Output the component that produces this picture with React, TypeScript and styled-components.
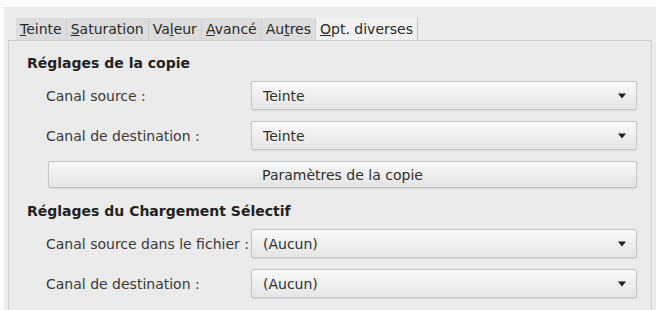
import styled, { createGlobalStyle } from 'styled-components';

const GlobalStyle = createGlobalStyle`
  html, body {
    margin: 0;
    padding: 0;
    background: #fbfbfb;
  }
  body {
    font-family: 'DejaVu Sans', 'Liberation Sans', sans-serif;
    font-size: 14px;
    color: #333333;
  }
`;

const tabs = [
  { pre: '', key: 'T', post: 'einte' },
  { pre: '', key: 'S', post: 'aturation' },
  { pre: 'Va', key: 'l', post: 'eur' },
  { pre: '', key: 'A', post: 'vancé' },
  { pre: 'Au', key: 't', post: 'res' },
  { pre: '', key: 'O', post: 'pt. diverses' },
];

const Window = styled.div`
  margin: 7px 0 0 4px;
  height: calc(100vh - 7px);
  background: #ebebeb;
  padding: 11px 4px 0 4px;
  box-sizing: border-box;
  overflow: hidden;
`;

const TabBar = styled.div`
  display: flex;
  padding-left: 8px;
  height: 22px;
`;

const Tab = styled.div<{ $active?: boolean }>`
  height: 22px;
  line-height: 22px;
  padding: 0 4px;
  background: ${({ $active }) => ($active ? '#f1f1f1' : '#dcdcdc')};
  border-right: 1px solid ${({ $active }) => ($active ? '#c4c4c4' : '#d0d0d0')};
  color: #2a2a2a;
  white-space: nowrap;
`;

const Pane = styled.div`
  border: 1px solid #cfcfcf;
  border-bottom: none;
  height: 300px;
  padding: 14px 14px 0 18px;
  box-sizing: border-box;
`;

const Heading = styled.div<{ $top?: number }>`
  font-weight: bold;
  line-height: 16px;
  color: #222222;
  margin-top: ${({ $top }) => $top ?? 0}px;
`;

const Rows = styled.div`
  display: flex;
  flex-direction: column;
  gap: 11px;
  margin-top: 10px;
  padding-left: 19px;
`;

const Row = styled.div`
  display: grid;
  grid-template-columns: 205px 1fr;
  align-items: center;
`;

const Label = styled.div`
  color: #3a3a3a;
  white-space: nowrap;
`;

const Combo = styled.div`
  height: 29px;
  box-sizing: border-box;
  border: 1px solid #c6c6c6;
  border-radius: 2px;
  background: linear-gradient(#f8f8f8, #e6e6e6);
  box-shadow: 0 1px 1px rgba(0, 0, 0, 0.08);
  display: flex;
  align-items: center;
  justify-content: space-between;
  padding: 0 10px 0 11px;
  color: #2f2f2f;
`;

const Button = styled.div`
  height: 27px;
  margin-left: 2px;
  box-sizing: border-box;
  border: 1px solid #c6c6c6;
  border-radius: 2px;
  background: linear-gradient(#f8f8f8, #e4e4e4);
  box-shadow: 0 1px 1px rgba(0, 0, 0, 0.08);
  display: flex;
  align-items: center;
  justify-content: center;
  color: #2f2f2f;
`;

const Arrow = () => (
  <svg width="8" height="6" viewBox="0 0 8 6">
    <path d="M0 0.5 L8 0.5 L4 5.5 Z" fill="#1e1e1e" />
  </svg>
);

const ComboRow = ({ label, value }: { label: string; value: string }) => (
  <Row>
    <Label>{label}</Label>
    <Combo>
      <span>{value}</span>
      <Arrow />
    </Combo>
  </Row>
);

export default function App() {
  return (
    <>
      <GlobalStyle />
      <Window>
        <TabBar>
          {tabs.map((t, i) => (
            <Tab key={i} $active={i === tabs.length - 1}>
              {t.pre}
              <u>{t.key}</u>
              {t.post}
            </Tab>
          ))}
        </TabBar>
        <Pane>
          <Heading>Réglages de la copie</Heading>
          <Rows>
            <ComboRow label="Canal source :" value="Teinte" />
            <ComboRow label="Canal de destination :" value="Teinte" />
            <Button>Paramètres de la copie</Button>
          </Rows>
          <Heading $top={15}>Réglages du Chargement Sélectif</Heading>
          <Rows>
            <ComboRow label="Canal source dans le fichier :" value="(Aucun)" />
            <ComboRow label="Canal de destination :" value="(Aucun)" />
          </Rows>
        </Pane>
      </Window>
    </>
  );
}
